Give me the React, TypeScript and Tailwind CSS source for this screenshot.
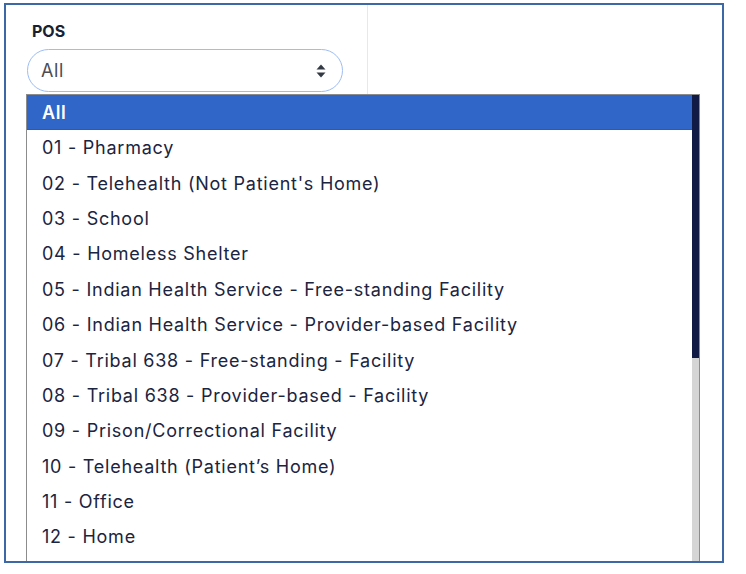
const options = [
  "01 - Pharmacy",
  "02 - Telehealth (Not Patient's Home)",
  "03 - School",
  "04 - Homeless Shelter",
  "05 - Indian Health Service - Free-standing Facility",
  "06 - Indian Health Service - Provider-based Facility",
  "07 - Tribal 638 - Free-standing - Facility",
  "08 - Tribal 638 - Provider-based - Facility",
  "09 - Prison/Correctional Facility",
  "10 - Telehealth (Patient’s Home)",
  "11 - Office",
  "12 - Home",
];

function SortIcon() {
  return (
    <svg width="10" height="14" viewBox="0 0 10 14" className="text-[#333a44]">
      <path d="M5 0.5 L9.5 5.5 H0.5 Z" fill="currentColor" />
      <path d="M5 13.5 L9.5 8.5 H0.5 Z" fill="currentColor" />
    </svg>
  );
}

export default function App() {
  return (
    <div className="w-[746px] h-[574px] bg-white pt-[3px] pl-[4px]" style={{ fontFamily: "Inter, 'Open Sans', sans-serif" }}>
      <div className="relative w-[720px] h-[560px] border-2 border-[#3d68a8] overflow-hidden bg-white">
        <div className="w-[362px] h-full border-r border-[#e6e8ee] pl-[21px] pt-[14px]">
          <div className="ml-[5px] text-[16px] leading-[24px] font-bold text-[#1a2033]">POS</div>
          <div className="mt-[6px] w-[316px] h-[43px] rounded-full border-[1.5px] border-[#9dbdf3] flex items-center justify-between pl-[13px] pr-[16px]">
            <span className="text-[18px] tracking-[0.6px] text-[#4a4d55]">All</span>
            <SortIcon />
          </div>
        </div>

        <div className="absolute left-[20px] top-[89px] w-[674px] h-[520px] border border-[#8c8c8c] bg-white flex">
          <div className="flex-1 flex flex-col">
            <div className="h-[35px] bg-[#3066c8] border-b border-[#2a5ab3] flex items-center pl-[15px] text-[18px] tracking-[0.6px] font-semibold text-white">
              All
            </div>
            {options.map((o) => (
              <div key={o} className="h-[35.4px] shrink-0 flex items-center pl-[15px] text-[18px] tracking-[0.75px] text-[#1b2440]">
                {o}
              </div>
            ))}
          </div>
          <div className="w-[7px] flex flex-col">
            <div className="h-[263px] bg-[#111a45]"></div>
            <div className="flex-1 bg-[#d5d5d5]"></div>
          </div>
        </div>
      </div>
    </div>
  );
}
